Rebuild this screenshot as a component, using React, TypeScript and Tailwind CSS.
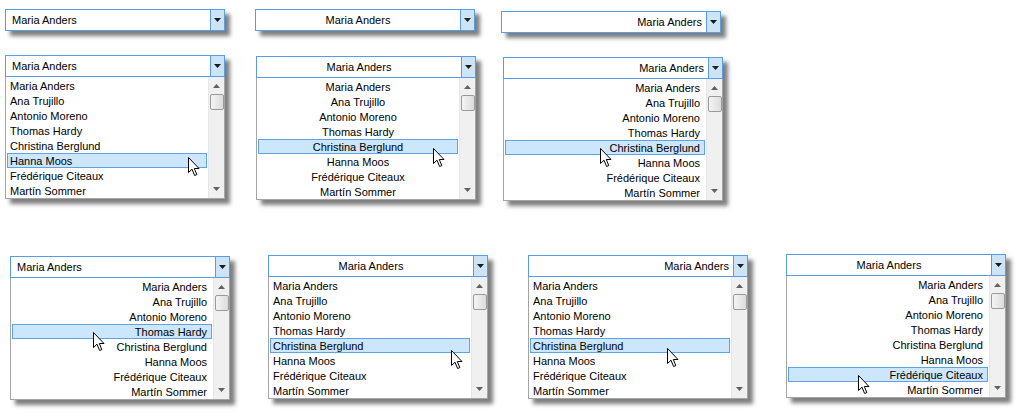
import React from 'react';

type Align = 'left' | 'center' | 'right';

interface ComboProps {
  textAlign: Align;
  listAlign?: Align;
  selected?: number;
  open?: boolean;
  cursor?: { x: number; y: number };
  className?: string;
}

const NAMES = [
  'Maria Anders',
  'Ana Trujillo',
  'Antonio Moreno',
  'Thomas Hardy',
  'Christina Berglund',
  'Hanna Moos',
  'Frédérique Citeaux',
  'Martín Sommer',
];

const alignClass: Record<Align, string> = {
  left: 'justify-start pl-[6px]',
  center: 'justify-center',
  right: 'justify-end pr-[4px]',
};

const itemAlign: Record<Align, string> = {
  left: 'justify-start pl-[2px]',
  center: 'justify-center',
  right: 'justify-end pr-[4px]',
};

const Cursor = ({ x, y }: { x: number; y: number }) => (
  <svg
    width="13"
    height="20"
    viewBox="0 0 13 20"
    className="absolute z-10"
    style={{ left: x, top: y }}
  >
    <path
      d="M0.5 0.5 L0.5 15.5 L4 12.2 L6.6 18.5 L8.8 17.6 L6.3 11.5 L11 11.5 Z"
      fill="#fff"
      stroke="#000"
      strokeWidth="1"
    />
  </svg>
);

const ScrollBar = () => (
  <div className="w-[16px] shrink-0 bg-[#f0f0f0] border-l border-[#e6e6e6] flex flex-col items-center">
    <svg width="7" height="4" viewBox="0 0 7 4" className="mt-[7px]">
      <path d="M0 4 L3.5 0 L7 4 Z" fill="#606060" />
    </svg>
    <div className="mt-[6px] w-[14px] h-[16px] rounded-[2px] border border-[#9a9a9a] bg-gradient-to-r from-[#f4f4f4] to-[#dcdcdc]" />
    <div className="flex-1" />
    <svg width="7" height="4" viewBox="0 0 7 4" className="mb-[7px]">
      <path d="M0 0 L7 0 L3.5 4 Z" fill="#606060" />
    </svg>
  </div>
);

const Combo = ({ textAlign, listAlign, selected, open, cursor, className }: ComboProps) => (
  <div className={`relative w-[220px] shrink-0 shadow-[5px_5px_4px_rgba(0,0,0,0.5)] ${className ?? ''}`}>
    <div className="flex h-[22px] border border-[#569de5] bg-white">
      <div className={`flex-1 flex items-center pt-[1px] ${alignClass[textAlign]}`}>Maria Anders</div>
      <div className="w-[14px] border-l border-[#569de5] bg-[#cde4f7] flex items-center justify-center">
        <svg width="7" height="4" viewBox="0 0 7 4">
          <path d="M0 0 L7 0 L3.5 4 Z" fill="#1a1a1a" />
        </svg>
      </div>
    </div>
    {open && (
      <div className="flex h-[122px] border border-t-0 border-[#a4a4a4] bg-white">
        <div className="flex-1 pt-[1px] px-[1px]">
          {NAMES.map((n, i) => (
            <div
              key={n}
              className={`h-[15px] flex items-center pt-[1px] border ${itemAlign[listAlign ?? 'left']} ${
                i === selected ? 'bg-[#cce6fb] border-[#5fa3e6]' : 'border-transparent'
              }`}
            >
              {n}
            </div>
          ))}
        </div>
        <ScrollBar />
      </div>
    )}
    {cursor && <Cursor x={cursor.x} y={cursor.y} />}
  </div>
);

export default function App() {
  return (
    <div
      className="w-[1019px] h-[416px] bg-white text-[11px] leading-none text-black overflow-hidden"
      style={{ fontFamily: '"Liberation Sans", Arial, sans-serif' }}
    >
      <div className="flex items-start h-[45px]">
        <Combo className="ml-[5px] mt-[9px]" textAlign="left" />
        <Combo className="ml-[30px] mt-[9px]" textAlign="center" />
        <Combo className="ml-[26px] mt-[11px]" textAlign="right" />
      </div>
      <div className="flex items-start h-[200px]">
        <Combo className="ml-[5px] mt-[10px]" textAlign="left" listAlign="left" open selected={5} cursor={{ x: 183, y: 102 }} />
        <Combo className="ml-[31px] mt-[11px]" textAlign="center" listAlign="center" open selected={4} cursor={{ x: 177, y: 92 }} />
        <Combo className="ml-[27px] mt-[12px]" textAlign="right" listAlign="right" open selected={4} cursor={{ x: 97, y: 91 }} />
      </div>
      <div className="flex items-start">
        <Combo className="ml-[10px] mt-[11px]" textAlign="left" listAlign="right" open selected={3} cursor={{ x: 83, y: 76 }} />
        <Combo className="ml-[38px] mt-[10px]" textAlign="center" listAlign="left" open selected={4} cursor={{ x: 183, y: 95 }} />
        <Combo className="ml-[40px] mt-[10px]" textAlign="right" listAlign="left" open selected={4} cursor={{ x: 139, y: 93 }} />
        <Combo className="ml-[38px] mt-[9px]" textAlign="center" listAlign="right" open selected={6} cursor={{ x: 72, y: 121 }} />
      </div>
    </div>
  );
}
